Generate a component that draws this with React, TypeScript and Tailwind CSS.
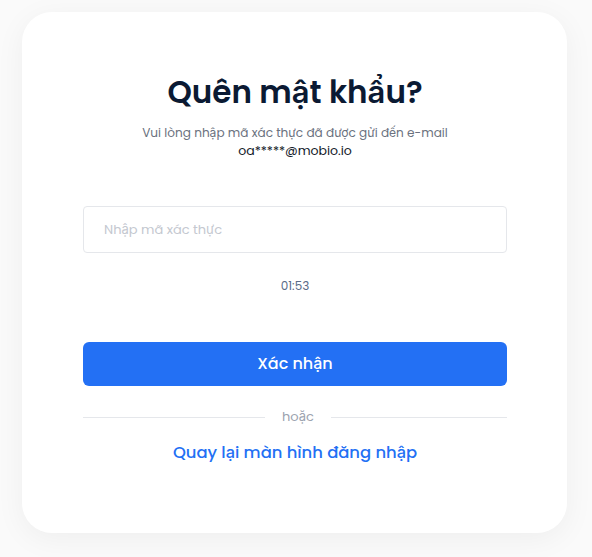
import React from 'react';

const font = { fontFamily: '"Poppins", "Inter", "Noto Sans", sans-serif' };

const ForgotPasswordPage: React.FC = () => {
  return (
    <div className="w-[592px] h-[557px] bg-[#fafafa] pt-[12px] pl-[22px] overflow-hidden" style={font}>
      {/* Card */}
      <div className="w-[545px] h-[521px] rounded-[30px] bg-white shadow-[0_6px_30px_rgba(0,0,0,0.05)] pl-[61px] pr-[60px] pt-[60px] flex flex-col">
        <h1 className="text-[31px] leading-[41px] font-semibold text-[#0b1a33] text-center">Quên mật khẩu?</h1>
        <p className="mt-[11px] text-[12.1px] leading-[18px] text-[#6b7280] text-center">
          Vui lòng nhập mã xác thực đã được gửi đến e-mail
          <br />
          <span className="text-[#111827] text-[12.5px]">oa*****@mobio.io</span>
        </p>

        <input
          type="text"
          placeholder="Nhập mã xác thực"
          className="mt-[46px] h-[47px] w-full rounded-[4px] border border-[#e5e7eb] px-[20px] text-[13px] text-[#111827] placeholder:text-[#c4c8d0] outline-none"
        />

        <div className="mt-[24px] text-[12px] leading-[18px] text-[#5a6b87] text-center">01:53</div>

        <button className="mt-[47px] h-[44px] w-full rounded-[6px] bg-[#2370f4] text-white text-[16px] font-medium">
          Xác nhận
        </button>

        {/* Divider */}
        <div className="mt-[21px] flex items-center">
          <div className="w-[182px] h-px bg-[#e5e7eb]" />
          <span className="px-[17px] text-[13px] leading-[20px] text-[#9ca3af]">hoặc</span>
          <div className="flex-1 h-px bg-[#e5e7eb]" />
        </div>

        <a href="#" className="mt-[14px] text-[16.4px] leading-[24px] font-medium text-[#2370f4] text-center">
          Quay lại màn hình đăng nhập
        </a>
      </div>
    </div>
  );
};

export default function App() {
  return <ForgotPasswordPage />;
}
